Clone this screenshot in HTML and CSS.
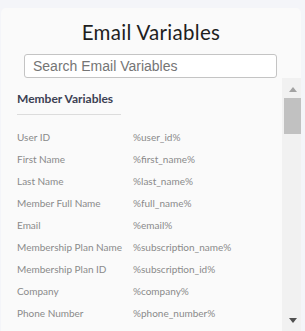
FILE: index.html
```html
<!DOCTYPE html>
<html lang="en">
  <head>
    <meta charset="UTF-8" />
    <meta name="viewport" content="width=device-width, initial-scale=1.0" />
    <title>Email Variables</title>
    <link rel="stylesheet" href="styles.css">
  </head>
  <body>
    <div class="panel">
      <h1 class="panel-title">Email Variables</h1>
      <input class="search" type="text" placeholder="Search Email Variables" />

      <div class="list-wrap">
        <div class="var-list">
          <!-- member -->
          <div class="group">
            <h2 class="group-title">Member Variables</h2>
            <div class="rows">
              <div class="row"><span>User ID</span><span>%user_id%</span></div>
              <div class="row"><span>First Name</span><span>%first_name%</span></div>
              <div class="row"><span>Last Name</span><span>%last_name%</span></div>
              <div class="row"><span>Member Full Name</span><span>%full_name%</span></div>
              <div class="row"><span>Email</span><span>%email%</span></div>
              <div class="row"><span>Membership Plan Name</span><span>%subscription_name%</span></div>
              <div class="row"><span>Membership Plan ID</span><span>%subscription_id%</span></div>
              <div class="row"><span>Company</span><span>%company%</span></div>
              <div class="row"><span>Phone Number</span><span>%phone_number%</span></div>
            </div>
          </div>
        </div>

        <!-- 스크롤바 -->
        <div class="scrollbar">
          <div class="sb-btn sb-up"><span class="arrow-up"></span></div>
          <div class="sb-thumb"></div>
          <div class="sb-track"></div>
          <div class="sb-btn sb-down"><span class="arrow-down"></span></div>
        </div>
      </div>
    </div>
  </body>
</html>
```

FILE: styles.css
```css
* {
  box-sizing: border-box;
}
body {
  margin: 0;
  padding: 8px 4px 0 1px;
  background-color: #f4f5f9;
  font-family: Lato, "Open Sans", sans-serif;
  overflow: hidden;
}
.panel {
  background-color: #fafafa;
  border-radius: 5px 5px 0 0;
  padding-top: 12px;
  display: flex;
  flex-direction: column;
}
.panel-title {
  margin: 0;
  font-size: 20.5px;
  line-height: 24px;
  font-weight: 400;
  color: #1e1e1e;
  text-align: center;
  letter-spacing: 0.3px;
}
.search {
  margin: 10px 24px 0 23px;
  height: 24px;
  border: 1px solid #c4c4c4;
  border-radius: 3px;
  padding: 0 8px;
  font-family: "Liberation Sans", Arial, sans-serif;
  font-size: 14px;
  color: #333;
  background: #fff;
  outline: none;
}
.search::placeholder {
  color: #757575;
}

/* 목록 영역 */
.list-wrap {
  display: flex;
  height: 253px;
}
.var-list {
  flex: 1;
  overflow: hidden;
  padding: 13px 0 0 16px;
}
.group-title {
  width: 104px;
  margin: 0;
  padding-bottom: 7px;
  border-bottom: 1px solid #dcdcdc;
  font-size: 12px;
  line-height: 16px;
  font-weight: 700;
  color: #3c4153;
  white-space: nowrap;
}
.rows {
  margin-top: 11px;
}
.row {
  display: grid;
  grid-template-columns: 116px auto;
  height: 22px;
  line-height: 22px;
  font-size: 10px;
  color: #8a8a8a;
  white-space: nowrap;
}

/* 스크롤바 */
.scrollbar {
  width: 19px;
  background-color: #f1f1f1;
  display: flex;
  flex-direction: column;
}
.sb-btn {
  height: 20px;
  display: flex;
  justify-content: center;
  padding-left: 2px;
}
.sb-up {
  padding-top: 9px;
}
.sb-down {
  padding-top: 7px;
}
.arrow-up {
  width: 0;
  height: 0;
  border-left: 4px solid transparent;
  border-right: 4px solid transparent;
  border-bottom: 5px solid #a3a3a3;
}
.arrow-down {
  width: 0;
  height: 0;
  border-left: 4.5px solid transparent;
  border-right: 4.5px solid transparent;
  border-top: 5px solid #505050;
}
.sb-thumb {
  height: 36px;
  margin-left: 2px;
  background-color: #c1c1c1;
}
.sb-track {
  flex: 1;
}
```
